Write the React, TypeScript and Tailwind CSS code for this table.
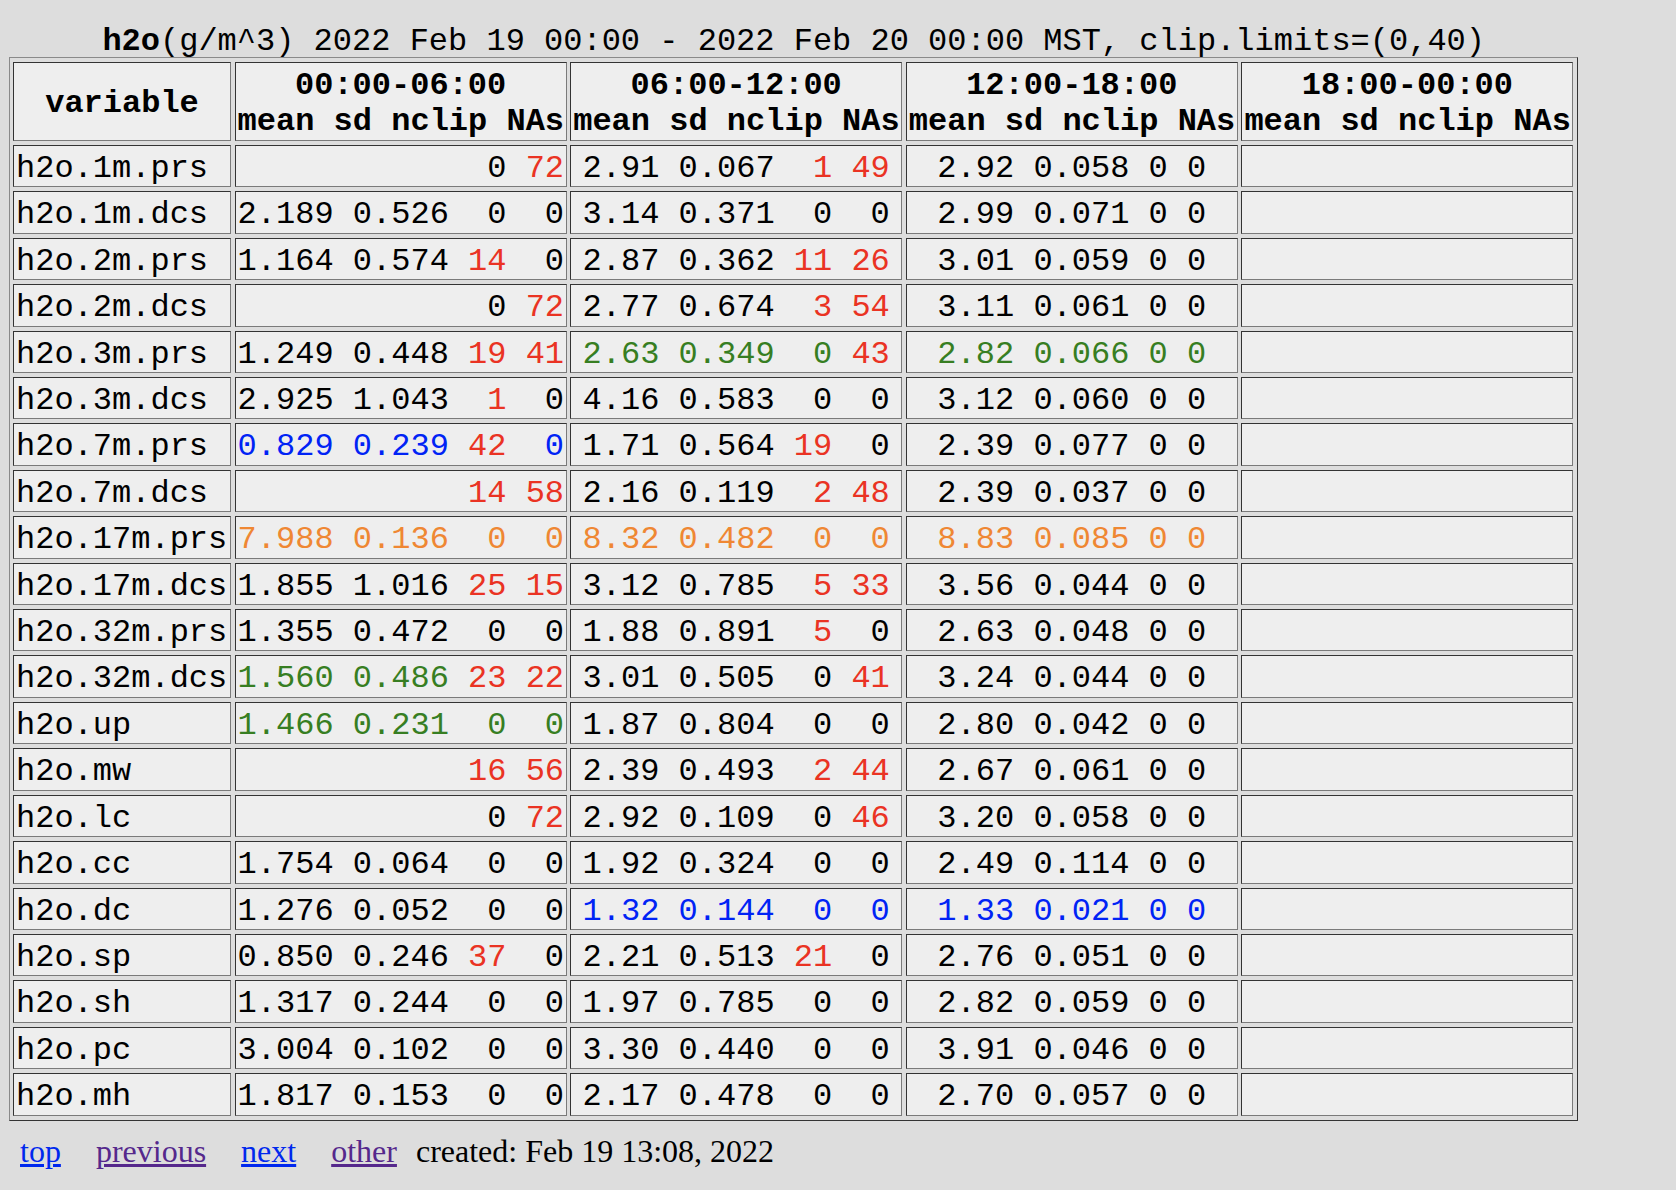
import React from "react";

// colour codes used as a suffix on values: r=red, g=green, b=blue, o=orange
const colors: Record<string, string> = {
  k: "text-black",
  r: "text-[#ea3323]",
  g: "text-[#377e22]",
  b: "text-[#0023f5]",
  o: "text-[#ef8733]",
};

const periods = ["00:00-06:00", "06:00-12:00", "12:00-18:00", "18:00-00:00"];

// field widths per period column (mean, sd, nclip, NAs)
const widths = [
  [5, 5, 2, 2],
  [4, 5, 2, 2],
  [4, 5, 1, 1],
];

type Row = [string, string[], string[], string[]];

const rows: Row[] = [
  ["h2o.1m.prs", ["", "", "0", "72r"], ["2.91", "0.067", "1r", "49r"], ["2.92", "0.058", "0", "0"]],
  ["h2o.1m.dcs", ["2.189", "0.526", "0", "0"], ["3.14", "0.371", "0", "0"], ["2.99", "0.071", "0", "0"]],
  ["h2o.2m.prs", ["1.164", "0.574", "14r", "0"], ["2.87", "0.362", "11r", "26r"], ["3.01", "0.059", "0", "0"]],
  ["h2o.2m.dcs", ["", "", "0", "72r"], ["2.77", "0.674", "3r", "54r"], ["3.11", "0.061", "0", "0"]],
  ["h2o.3m.prs", ["1.249", "0.448", "19r", "41r"], ["2.63g", "0.349g", "0g", "43r"], ["2.82g", "0.066g", "0g", "0g"]],
  ["h2o.3m.dcs", ["2.925", "1.043", "1r", "0"], ["4.16", "0.583", "0", "0"], ["3.12", "0.060", "0", "0"]],
  ["h2o.7m.prs", ["0.829b", "0.239b", "42r", "0b"], ["1.71", "0.564", "19r", "0"], ["2.39", "0.077", "0", "0"]],
  ["h2o.7m.dcs", ["", "", "14r", "58r"], ["2.16", "0.119", "2r", "48r"], ["2.39", "0.037", "0", "0"]],
  ["h2o.17m.prs", ["7.988o", "0.136o", "0o", "0o"], ["8.32o", "0.482o", "0o", "0o"], ["8.83o", "0.085o", "0o", "0o"]],
  ["h2o.17m.dcs", ["1.855", "1.016", "25r", "15r"], ["3.12", "0.785", "5r", "33r"], ["3.56", "0.044", "0", "0"]],
  ["h2o.32m.prs", ["1.355", "0.472", "0", "0"], ["1.88", "0.891", "5r", "0"], ["2.63", "0.048", "0", "0"]],
  ["h2o.32m.dcs", ["1.560g", "0.486g", "23r", "22r"], ["3.01", "0.505", "0", "41r"], ["3.24", "0.044", "0", "0"]],
  ["h2o.up", ["1.466g", "0.231g", "0g", "0g"], ["1.87", "0.804", "0", "0"], ["2.80", "0.042", "0", "0"]],
  ["h2o.mw", ["", "", "16r", "56r"], ["2.39", "0.493", "2r", "44r"], ["2.67", "0.061", "0", "0"]],
  ["h2o.lc", ["", "", "0", "72r"], ["2.92", "0.109", "0", "46r"], ["3.20", "0.058", "0", "0"]],
  ["h2o.cc", ["1.754", "0.064", "0", "0"], ["1.92", "0.324", "0", "0"], ["2.49", "0.114", "0", "0"]],
  ["h2o.dc", ["1.276", "0.052", "0", "0"], ["1.32b", "0.144b", "0b", "0b"], ["1.33b", "0.021b", "0b", "0b"]],
  ["h2o.sp", ["0.850", "0.246", "37r", "0"], ["2.21", "0.513", "21r", "0"], ["2.76", "0.051", "0", "0"]],
  ["h2o.sh", ["1.317", "0.244", "0", "0"], ["1.97", "0.785", "0", "0"], ["2.82", "0.059", "0", "0"]],
  ["h2o.pc", ["3.004", "0.102", "0", "0"], ["3.30", "0.440", "0", "0"], ["3.91", "0.046", "0", "0"]],
  ["h2o.mh", ["1.817", "0.153", "0", "0"], ["2.17", "0.478", "0", "0"], ["2.70", "0.057", "0", "0"]],
];

const box =
  "bg-[#eeeeee] border border-t-[#333333] border-l-[#333333] border-r-[#7a7a7a] border-b-[#7a7a7a] px-[2px]";
const cell = `${box} pt-[5px] pb-0 leading-[35.4px]`;
const head = `${box} pt-[5px] pb-0 leading-[36px] font-bold`;

function parse(v: string): [string, string] {
  const last = v.slice(-1);
  if (v.length > 0 && "rgbo".includes(last)) return [v.slice(0, -1), last];
  return [v, "k"];
}

function Stats({ vals, w }: { vals: string[]; w: number[] }) {
  return (
    <div className={`${cell} whitespace-pre text-center`}>
      {vals.map((v, i) => {
        const [text, c] = parse(v);
        return (
          <React.Fragment key={i}>
            {i > 0 && " "}
            <span className={colors[c]}>{text.padStart(w[i], " ")}</span>
          </React.Fragment>
        );
      })}
    </div>
  );
}

export default function App() {
  return (
    <div className="min-h-screen bg-[#dddddd] pl-[9px] pt-[26px] font-['Liberation_Mono',monospace] text-[32px] text-black">
      <div className="w-fit">
        <div className="text-center leading-[31px] whitespace-pre">
          <b>h2o</b>(g/m^3) 2022 Feb 19 00:00 - 2022 Feb 20 00:00 MST, clip.limits=(0,40)
        </div>

        <div className="w-fit border border-t-[#8a8a8a] border-l-[#8a8a8a] border-r-[#333333] border-b-[#333333] pl-[3px] pr-[4px] py-[4px]">
          <div className="grid grid-cols-[218px_332px_332px_332px_332px] gap-x-[3.6px] gap-y-[4px]">
            {/* header row */}
            <div className={`${head} flex items-center justify-center`}>variable</div>
            {periods.map((p) => (
              <div key={p} className={`${head} text-center whitespace-pre`}>
                <div>{p}</div>
                <div>mean sd nclip NAs</div>
              </div>
            ))}

            {rows.map(([name, a, b, c]) => (
              <React.Fragment key={name}>
                <div className={`${cell} text-left`}>{name}</div>
                <Stats vals={a} w={widths[0]} />
                <Stats vals={b} w={widths[1]} />
                <Stats vals={c} w={widths[2]} />
                <div className={cell} />
              </React.Fragment>
            ))}
          </div>
        </div>
      </div>

      <div className="mt-[12px] pl-[11px] flex items-baseline font-['Liberation_Serif',serif] text-[32px] leading-[37px]">
        <a href="#" className="underline text-[#0028ee] mr-[35px]">top</a>
        <a href="#" className="underline text-[#55288c] mr-[35px]">previous</a>
        <a href="#" className="underline text-[#0028ee] mr-[35px]">next</a>
        <a href="#" className="underline text-[#55288c] mr-[19px]">other</a>
        <span>created: Feb 19 13:08, 2022</span>
      </div>
    </div>
  );
}
